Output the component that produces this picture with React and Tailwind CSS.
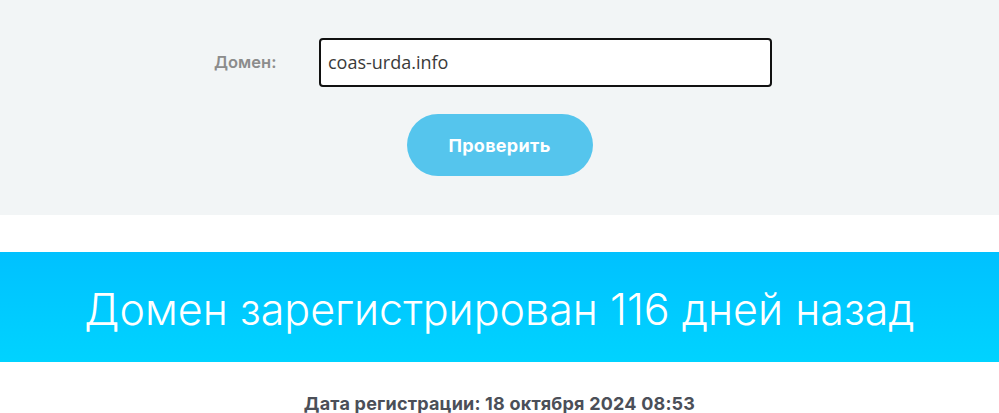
import React from 'react';

const App = () => {
  return (
    <div className="w-[999px] h-[413px] overflow-hidden bg-white font-['Inter','Open_Sans',sans-serif]">
      {/* Form */}
      <div className="h-[215px] bg-[#f2f5f6] pt-[38px]">
        <div className="flex items-center pl-[214px]">
          <label className="w-[105px] text-[16.5px] font-semibold text-[#8c8c8c]">Домен:</label>
          <div className="w-[453px] h-[49px] rounded-[4px] border-2 border-[#111] bg-white flex items-center pl-[7px] font-['Open_Sans',Arial,sans-serif] text-[18px] text-[#3a3a3a]">
            coas-urda.info
          </div>
        </div>
        <div className="flex justify-center mt-[27px]">
          <button className="w-[186px] h-[62px] rounded-full bg-[#55c5ed] text-white text-[18px] font-bold tracking-[0.3px]">
            Проверить
          </button>
        </div>
      </div>

      {/* Result */}
      <div className="mt-[37px] h-[110px] bg-gradient-to-b from-[#00c1ff] to-[#00d3ff] flex items-center justify-center">
        <h1 className="text-white text-[43px] font-light pt-[4px]">Домен зарегистрирован 116 дней назад</h1>
      </div>
      <p className="mt-[28px] text-center text-[18px] font-bold text-[#4b4f58] tracking-[0.2px]">
        Дата регистрации: 18 октября 2024 08:53
      </p>
    </div>
  );
};

export default App;
